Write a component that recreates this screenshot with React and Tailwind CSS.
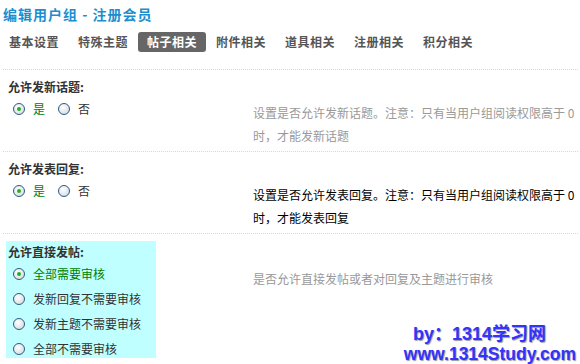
import React from "react";

const tabs = ["基本设置", "特殊主题", "帖子相关", "附件相关", "道具相关", "注册相关", "积分相关"];

function Radio({ checked, label }) {
  return (
    <div className="flex items-center h-[18px] leading-[18px]">
      <span className="ml-[5px] w-[12px] h-[12px] rounded-full border border-[#2c5a85] bg-[radial-gradient(circle_at_40%_35%,#ffffff,#cfd5db)] flex items-center justify-center">
        {checked && <span className="w-[4px] h-[4px] rounded-full bg-[#22b022]" />}
      </span>
      <span className={"ml-[8px] " + (checked ? "text-[#008000]" : "text-[#333]")}>{label}</span>
    </div>
  );
}

export default function App() {
  return (
    <div
      className="relative w-[580px] h-[364px] bg-white overflow-hidden text-[12px]"
      style={{ fontFamily: '"Noto Sans CJK SC", "Noto Sans", sans-serif' }}
    >
      {/* Title */}
      <div className="pl-[3px] pt-[4px] leading-[20px] text-[14px] font-bold text-[#1a8fd0] tracking-[1px]">
        编辑用户组 - 注册会员
      </div>

      {/* Tabs */}
      <div className="flex gap-[1px] mt-[8px] h-[20px]">
        {tabs.map((t, i) => (
          <div
            key={t}
            className={
              "px-[9px] leading-[20px] font-bold tracking-[0.5px] rounded-[3px] " +
              (i === 2 ? "bg-[#666] text-white" : "text-[#555]")
            }
          >
            {t}
          </div>
        ))}
      </div>

      <div className="ml-[3px] mr-[2px] mt-[17px]">
        {/* Row 1 */}
        <div className="flex h-[82px] border-t border-dotted border-[#c9dce8]">
          <div className="w-[250px] pl-[3px]">
            <div className="px-[2px] pt-[8px]">
              <div className="leading-[18px] font-bold text-[#333]">允许发新话题:</div>
              <div className="flex mt-[4px]">
                <Radio checked label="是" />
                <div className="ml-[8px]">
                  <Radio label="否" />
                </div>
              </div>
            </div>
          </div>
          <div className="w-[325px] pt-[31px] leading-[23px] text-[#999]">
            设置是否允许发新话题。注意：只有当用户组阅读权限高于&nbsp;0 时，才能发新话题
          </div>
        </div>

        {/* Row 2 */}
        <div className="flex h-[82px] border-t border-dotted border-[#c9dce8]">
          <div className="w-[250px] pl-[3px]">
            <div className="px-[2px] pt-[8px]">
              <div className="leading-[18px] font-bold text-[#333]">允许发表回复:</div>
              <div className="flex mt-[4px]">
                <Radio checked label="是" />
                <div className="ml-[8px]">
                  <Radio label="否" />
                </div>
              </div>
            </div>
          </div>
          <div className="w-[325px] pt-[31px] leading-[23px] text-black">
            设置是否允许发表回复。注意：只有当用户组阅读权限高于&nbsp;0 时，才能发表回复
          </div>
        </div>

        {/* Row 3 */}
        <div className="flex border-t border-dotted border-[#c9dce8]">
          <div className="w-[250px] pl-[3px]">
            <div className="mt-[7px] w-[150px] h-[117px] bg-[#c0ffff] px-[2px] pt-[2px]">
              <div className="leading-[18px] font-bold text-[#333]">允许直接发帖:</div>
              <div className="mt-[4px] flex flex-col gap-[7px]">
                <Radio checked label="全部需要审核" />
                <Radio label="发新回复不需要审核" />
                <Radio label="发新主题不需要审核" />
                <Radio label="全部不需要审核" />
              </div>
            </div>
          </div>
          <div className="w-[325px] pt-[33px] leading-[23px] text-[#999]">
            是否允许直接发帖或者对回复及主题进行审核
          </div>
        </div>
      </div>

      {/* Watermark */}
      <div
        className="absolute right-[4px] bottom-[0px] flex flex-col items-end font-bold text-[#3333ff] [text-shadow:1px_1px_1px_#9a9a9a]"
        style={{ fontFamily: '"Liberation Sans", "Noto Sans CJK SC", sans-serif' }}
      >
        <div className="text-[18px] leading-[20px] mr-[30px]">by：1314学习网</div>
        <div className="text-[17.5px] leading-[20px]">www.1314Study.com</div>
      </div>
    </div>
  );
}
